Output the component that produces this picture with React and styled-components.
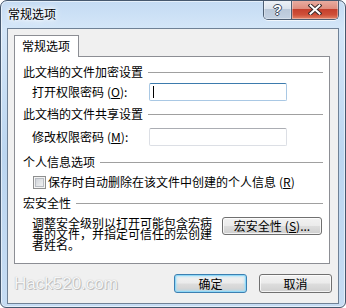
import React from "react";
import styled, { createGlobalStyle } from "styled-components";

const GlobalStyle = createGlobalStyle`
  html, body {
    margin: 0;
    padding: 0;
    background: #fff;
  }
  body {
    font-family: "Noto Sans CJK SC", "Liberation Sans", sans-serif;
    font-size: 12px;
    color: #000;
  }
  * {
    box-sizing: border-box;
  }
`;

const Window = styled.div`
  width: 346px;
  height: 308px;
  border: 1px solid #46586e;
  border-radius: 7px 7px 6px 6px;
  background: linear-gradient(180deg, #c4dbf3 0%, #d4e6f8 9%, #bcd6f0 50%, #c6dcf3 100%);
  box-shadow: inset 0 0 0 1px rgba(255, 255, 255, 0.55);
  padding: 0 6px 3px;
  display: flex;
  flex-direction: column;
  overflow: hidden;
`;

const TitleBar = styled.div`
  height: 27px;
  display: flex;
  align-items: flex-start;
`;

const Title = styled.div`
  margin: 5px 0 0 1px;
  line-height: 16px;
  text-shadow: 0 0 3px #fff, 0 0 6px #fff, 0 0 9px #fff;
`;

const CaptionGroup = styled.div`
  margin: -1px 0 0 auto;
  display: flex;
  border: 1px solid #4e5e72;
  border-top: none;
  border-radius: 0 0 5px 5px;
  overflow: hidden;
  box-shadow: 0 1px 0 rgba(255, 255, 255, 0.7);
`;

const CaptionButton = styled.div`
  width: ${(p) => p.$w}px;
  height: 19px;
  display: flex;
  align-items: center;
  justify-content: center;
  background: ${(p) =>
    p.$close
      ? "linear-gradient(180deg, #eab0a4 0%, #df8e7f 45%, #c5402d 50%, #cf5039 78%, #e3866a 100%)"
      : "linear-gradient(180deg, #eef2f7 0%, #dbe3ed 45%, #bac8d9 50%, #c3d1e2 100%)"};
  box-shadow: inset 0 0 0 1px rgba(255, 255, 255, 0.35);
  & + & {
    border-left: 1px solid #4e5e72;
  }
`;

const HelpGlyph = styled.span`
  font-family: "Liberation Sans", sans-serif;
  font-weight: bold;
  font-size: 14px;
  line-height: 14px;
  color: #fff;
  text-shadow: 1px 0 0 #3c4a5c, -1px 0 0 #3c4a5c, 0 1px 0 #3c4a5c, 0 -1px 0 #3c4a5c;
`;

const Client = styled.div`
  flex: 1;
  border: 1px solid #6f8196;
  background: #f0f0f0;
  padding: 6px 8px 0 6px;
  display: flex;
  flex-direction: column;
`;

const TabStrip = styled.div`
  display: flex;
`;

const Tab = styled.div`
  position: relative;
  z-index: 1;
  width: 65px;
  height: 22px;
  margin-bottom: -1px;
  padding-left: 7px;
  border: 1px solid #8c8e94;
  border-bottom: none;
  background: #fff;
  line-height: 19px;
`;

const Panel = styled.div`
  height: 208px;
  border: 1px solid #8c8e94;
  background: #fff;
  padding: 8px 6px 0 8px;
  display: flex;
  flex-direction: column;
`;

const GroupHeader = styled.div`
  display: flex;
  align-items: center;
  gap: 5px;
  height: 14px;
  line-height: 14px;
  margin-top: ${(p) => p.$mt || 0}px;
  &::after {
    content: "";
    flex: 1;
    height: 1px;
    background: #a0a0a0;
  }
`;

const FieldRow = styled.div`
  display: flex;
  align-items: center;
  height: 18px;
  padding-left: 9px;
  margin-top: ${(p) => p.$mt}px;
`;

const Label = styled.div`
  width: 117px;
  line-height: 14px;
`;

const Key = styled.span`
  margin-left: 3px;
  u {
    text-decoration: underline;
  }
`;

const TextBox = styled.div`
  width: 138px;
  height: 18px;
  border: 1px solid ${(p) => (p.$focused ? "#a9c8e4" : "#dcdfe5")};
  border-top-color: ${(p) => (p.$focused ? "#3d7bad" : "#abadb3")};
  border-radius: 2px;
  background: #fff;
  display: flex;
  align-items: center;
`;

const Caret = styled.span`
  width: 1px;
  height: 12px;
  margin-left: 3px;
  background: #000;
`;

const CheckRow = styled.label`
  display: flex;
  align-items: center;
  height: 14px;
  margin-top: 6px;
  padding-left: 10px;
  line-height: 14px;
`;

const CheckBox = styled.span`
  width: 13px;
  height: 13px;
  margin-right: 2px;
  border: 1px solid #8e8f8f;
  background: linear-gradient(135deg, #c7cbd1 0%, #e6e8ea 60%, #f6f6f6 100%);
  box-shadow: inset 0 0 0 1px #f4f4f4, inset 0 0 0 2px #b9bdc3;
`;

const MacroRow = styled.div`
  display: flex;
  align-items: flex-start;
  margin-top: 7px;
  padding-left: 9px;
`;

const Para = styled.p`
  width: 181px;
  margin: 0;
  line-height: 11px;
`;

const PushButton = styled.div`
  width: ${(p) => p.$w}px;
  height: ${(p) => p.$h || 19}px;
  margin-left: ${(p) => p.$ml || 0}px;
  border: 1px solid ${(p) => (p.$default ? "#3c7fb1" : "#707070")};
  border-radius: 3px;
  background: linear-gradient(180deg, #f2f2f2 0%, #ebebeb 48%, #dddddd 52%, #cfcfcf 100%);
  box-shadow: ${(p) =>
    p.$default
      ? "inset 0 0 0 1px #8fd8f7, inset 0 0 2px 2px rgba(160, 220, 248, 0.6)"
      : "inset 0 0 0 1px rgba(255, 255, 255, 0.75)"};
  display: flex;
  align-items: center;
  justify-content: center;
  line-height: 14px;
  white-space: nowrap;
`;

const Footer = styled.div`
  display: flex;
  align-items: center;
  height: 19px;
  margin: 10px -2px 0 0;
`;

const Watermark = styled.div`
  font-family: "Liberation Sans", sans-serif;
  font-size: 17px;
  line-height: 19px;
  color: #f7f7f7;
  text-shadow: 0 0 1px #a8a8a8, 1px 1px 0 #c2c2c2;
`;

const FooterButtons = styled.div`
  margin-left: auto;
  display: flex;
  gap: 12px;
`;

const CloseIcon = () => (
  <svg width="14" height="11" viewBox="0 0 14 11">
    <path d="M2.5 1.5 L11.5 9.5 M11.5 1.5 L2.5 9.5" stroke="#3a2b2b" strokeWidth="4" strokeLinecap="square" />
    <path d="M2.5 1.5 L11.5 9.5 M11.5 1.5 L2.5 9.5" stroke="#fff" strokeWidth="2" strokeLinecap="square" />
  </svg>
);

export default function App() {
  return (
    <>
      <GlobalStyle />
      <Window>
        <TitleBar>
          <Title>常规选项</Title>
          <CaptionGroup>
            <CaptionButton $w={27}>
              <HelpGlyph>?</HelpGlyph>
            </CaptionButton>
            <CaptionButton $w={47} $close>
              <CloseIcon />
            </CaptionButton>
          </CaptionGroup>
        </TitleBar>

        <Client>
          <TabStrip>
            <Tab>常规选项</Tab>
          </TabStrip>

          <Panel>
            <GroupHeader>此文档的文件加密设置</GroupHeader>
            <FieldRow $mt={4}>
              <Label>
                打开权限密码<Key>(<u>O</u>):</Key>
              </Label>
              <TextBox $focused>
                <Caret />
              </TextBox>
            </FieldRow>

            <GroupHeader $mt={6}>此文档的文件共享设置</GroupHeader>
            <FieldRow $mt={7}>
              <Label>
                修改权限密码<Key>(<u>M</u>):</Key>
              </Label>
              <TextBox />
            </FieldRow>

            <GroupHeader $mt={9}>个人信息选项</GroupHeader>
            <CheckRow>
              <CheckBox />
              保存时自动删除在该文件中创建的个人信息<Key>(<u>R</u>)</Key>
            </CheckRow>

            <GroupHeader $mt={7}>宏安全性</GroupHeader>
            <MacroRow>
              <Para>调整安全级别以打开可能包含宏病毒的文件，并指定可信任的宏创建者姓名。</Para>
              <PushButton $w={100} $h={18} $ml={9}>
                宏安全性<Key>(<u>S</u>)...</Key>
              </PushButton>
            </MacroRow>
          </Panel>

          <Footer>
            <Watermark>Hack520.com</Watermark>
            <FooterButtons>
              <PushButton $w={73} $default>确定</PushButton>
              <PushButton $w={73}>取消</PushButton>
            </FooterButtons>
          </Footer>
        </Client>
      </Window>
    </>
  );
}
